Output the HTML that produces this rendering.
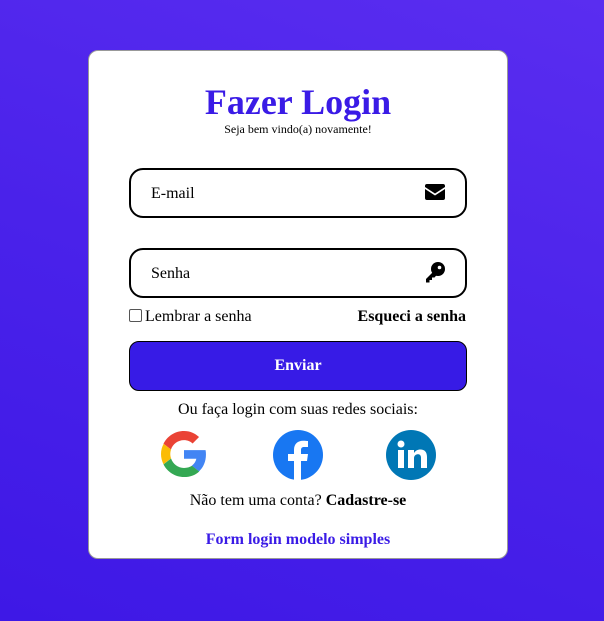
<!DOCTYPE html>
<html><head><meta charset="utf-8"><style>
*{box-sizing:border-box;margin:0;padding:0}
body{width:604px;height:621px;overflow:hidden;background:linear-gradient(200deg,#5a2df0 0%,#4a22ea 50%,#3e18e6 100%);font-family:"Liberation Serif",serif;position:relative}
.card{position:absolute;left:88px;top:50px;width:420px;height:509px;background:#fff;border:1px solid #999;border-radius:10px}
.abs{position:absolute}
h1{position:absolute;left:0;width:418px;top:29px;text-align:center;font-size:36px;color:#3a1be6;font-weight:bold;line-height:44px}
.sub{left:0;width:418px;top:71px;text-align:center;font-size:12px}
.inp{left:40px;width:338px;height:50px;border:2px solid #000;border-radius:14px;font-size:16px;padding:15px 0 0 20px}
.btn{left:40px;top:290px;width:338px;height:50px;background:#371be6;border:1px solid #000;border-radius:10px;color:#fff;font-weight:bold;font-size:16px;text-align:center;line-height:48px}
.c{left:0;width:418px;text-align:center;font-size:16px}
</style></head><body>
<div class="card">
<h1>Fazer Login</h1>
<div class="abs sub">Seja bem vindo(a) novamente!</div>
<div class="abs inp" style="top:117px">E-mail
<svg class="abs" style="left:294px;top:14px" width="20" height="16" viewBox="0 0 20 16"><path d="M2 0h16a2 2 0 0 1 2 2v1l-10 6.5L0 3V2a2 2 0 0 1 2-2zM0 5l10 6.5L20 5v9a2 2 0 0 1-2 2H2a2 2 0 0 1-2-2z" fill="#000"/></svg></div>
<div class="abs inp" style="top:197px">Senha
<svg class="abs" style="left:294px;top:12px" width="20" height="21" viewBox="0 0 20 21"><circle cx="13" cy="7" r="7" fill="#000"/><circle cx="14.5" cy="5.5" r="1.8" fill="#fff"/><path d="M10 8L1 17v3.5h3.5v-2.5h2.5v-2.5h2.5l3.5-4z" fill="#000"/></svg></div>
<div class="abs" style="left:40px;top:257px;font-size:16px"><span style="display:inline-block;width:13px;height:13px;border:1px solid #555;border-radius:2px;vertical-align:-1px;margin-right:3px"></span>Lembrar a senha</div>
<div class="abs" style="right:41px;top:257px;font-size:16px;font-weight:bold">Esqueci a senha</div>
<div class="abs btn">Enviar</div>
<div class="abs c" style="top:350px">Ou faça login com suas redes sociais:</div>
<svg class="abs" style="left:72px;top:380px" width="46" height="46" viewBox="0 0 48 48"><path fill="#EA4335" d="M24 9.5c3.5 0 6.6 1.2 9 3.5l6.7-6.7C35.6 2.4 30.2 0 24 0 14.6 0 6.6 5.4 2.6 13.3l7.8 6C12.3 13.6 17.7 9.5 24 9.5z"/><path fill="#4285F4" d="M46.9 24.5c0-1.6-.1-3.1-.4-4.5H24v9h12.9c-.6 3-2.3 5.5-4.8 7.2l7.6 5.9c4.4-4.1 7.2-10.1 7.2-17.6z"/><path fill="#FBBC05" d="M10.5 28.6c-.5-1.4-.8-3-.8-4.6s.3-3.2.8-4.6l-7.8-6C1 16.5 0 20.1 0 24s1 7.5 2.6 10.7l7.9-6.1z"/><path fill="#34A853" d="M24 48c6.5 0 11.9-2.1 15.9-5.8l-7.6-5.9c-2.1 1.4-4.9 2.3-8.3 2.3-6.3 0-11.6-4.2-13.5-9.9l-7.9 6.1C6.6 42.6 14.6 48 24 48z"/></svg>
<svg class="abs" style="left:184px;top:379px" width="50" height="50" viewBox="0 0 50 50"><circle cx="25" cy="25" r="25" fill="#1877F2"/><path d="M28 50V31h6l1-7h-7v-4c0-2 1-3 3-3h4v-6c-1 0-3-.3-5-.3-5 0-9 3-9 9v4.3h-6v7h6v19z" fill="#fff"/></svg>
<svg class="abs" style="left:297px;top:379px" width="50" height="50" viewBox="0 0 50 50"><circle cx="25" cy="25" r="25" fill="#0077B5"/><rect x="12" y="20" width="6" height="18" fill="#fff"/><circle cx="15" cy="14" r="3.5" fill="#fff"/><path d="M22 20h6v3c1.5-2.3 3.5-3.5 6.5-3.5 4 0 6.5 2.5 6.5 7.5V38h-6V28c0-2.5-1-3.8-3-3.8s-4 1.3-4 4V38h-6z" fill="#fff"/></svg>
<div class="abs c" style="top:441px">Não tem uma conta? <b>Cadastre-se</b></div>
<div class="abs c" style="top:480px;color:#3a1be6;font-weight:bold">Form login modelo simples</div>
</div>
</body></html>
